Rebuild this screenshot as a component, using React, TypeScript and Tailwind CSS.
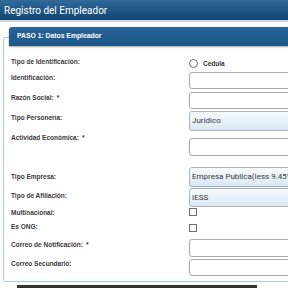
import React from 'react';

type Field = 'input' | 'select' | 'radio' | 'check';

interface Row {
  label: string;
  required?: boolean;
  field: Field;
  value?: string;
  top: number; // margin above row
  h: number; // row height
  labelTop: number; // label offset inside row
  fieldTop?: number;
}

const rows: Row[] = [
  { label: 'Tipo de Identificación:', field: 'radio', value: 'Cedula', top: 0, h: 19, labelTop: 5, fieldTop: 2 },
  { label: 'Identificación:', field: 'input', top: 0, h: 17, labelTop: 2 },
  { label: 'Razón Social:', required: true, field: 'input', top: 3, h: 17, labelTop: 2 },
  { label: 'Tipo Personería:', field: 'select', value: 'Jurídico', top: 2, h: 20, labelTop: 3 },
  { label: 'Actividad Económica:', required: true, field: 'input', top: 3, h: 22, labelTop: 0, fieldTop: 4 },
  { label: 'Tipo Empresa:', field: 'select', value: 'Empresa Publica(Iess 9.45%)', top: 11, h: 20, labelTop: 6 },
  { label: 'Tipo de Afiliación:', field: 'select', value: 'IESS', top: 1, h: 19, labelTop: 4 },
  { label: 'Multinacional:', field: 'check', top: 1, h: 15, labelTop: 1 },
  { label: 'Es ONG:', field: 'check', top: 0, h: 15, labelTop: 0, fieldTop: 1 },
  { label: 'Correo de Notificación:', required: true, field: 'input', top: 1, h: 18, labelTop: 2 },
  { label: 'Correo Secundario:', field: 'input', top: 2, h: 17, labelTop: 1 },
];

const FieldBox: React.FC<{ row: Row }> = ({ row }) => {
  const h = row.field === 'input' && row.fieldTop ? row.h - row.fieldTop : row.h;
  if (row.field === 'radio') {
    return (
      <div className="flex items-center gap-[5px]" style={{ marginTop: row.fieldTop }}>
        <span className="w-[9px] h-[9px] rounded-full border border-[#6f6f6f] bg-white" />
        <span className="text-[6.5px] font-bold text-[#333]">{row.value}</span>
      </div>
    );
  }
  if (row.field === 'check') {
    return <span className="block w-[8px] h-[8px] border border-[#6f6f6f] bg-white" style={{ marginTop: row.fieldTop ?? 0 }} />;
  }
  if (row.field === 'select') {
    return (
      <div
        className="w-[130px] border border-[#a9b3bb] rounded-[3px] bg-gradient-to-b from-[#f7fbfe] to-[#d9e8f5] flex items-center pl-[2px] text-[8px] text-[#3a3a3a] whitespace-nowrap overflow-hidden font-['Roboto',sans-serif]"
        style={{ height: h }}
      >
        {row.value}
      </div>
    );
  }
  return (
    <div
      className="w-[130px] border border-[#a9a9a9] rounded-[3px] bg-white"
      style={{ height: h, marginTop: row.fieldTop ?? 0 }}
    />
  );
};

export default function App() {
  return (
    <div className="w-[288px] h-[288px] overflow-hidden bg-white font-['Liberation_Sans',Arial,sans-serif]">
      <div className="h-[22px] bg-gradient-to-b from-[#32699a] to-[#0f4674] border-b-2 border-[#cdd6de] flex items-center pl-[4px] text-white text-[10px] font-['Roboto',sans-serif]">
        Registro del Empleador
      </div>

      <div className="ml-[3px] mt-[15px] w-[320px] h-[245px] border border-[#a7d0dc] rounded-[2px]">
        <div className="-mt-[11px] ml-[5px] h-[19px] bg-gradient-to-b from-[#2a659a] to-[#1b5688] rounded-tl-[3px] shadow-[0_1px_2px_rgba(0,0,0,0.35)] flex items-center pl-[8px] text-white text-[6.8px] font-bold">
          PASO 1: Datos Empleador
        </div>

        <div className="mt-[7px] flex flex-col">
          {rows.map((r) => (
            <div key={r.label} className="flex" style={{ marginTop: r.top, height: r.h }}>
              <div
                className="w-[185px] pl-[7px] text-[6.5px] font-bold text-[#3b3b3b] leading-[8px]"
                style={{ paddingTop: r.labelTop }}
              >
                {r.label}
                {r.required && <span className="ml-[3px]">*</span>}
              </div>
              <FieldBox row={r} />
            </div>
          ))}
        </div>
      </div>

      <div className="ml-[17px] mt-[3px] w-[240px] h-[6px] bg-[#333]" />
    </div>
  );
}
